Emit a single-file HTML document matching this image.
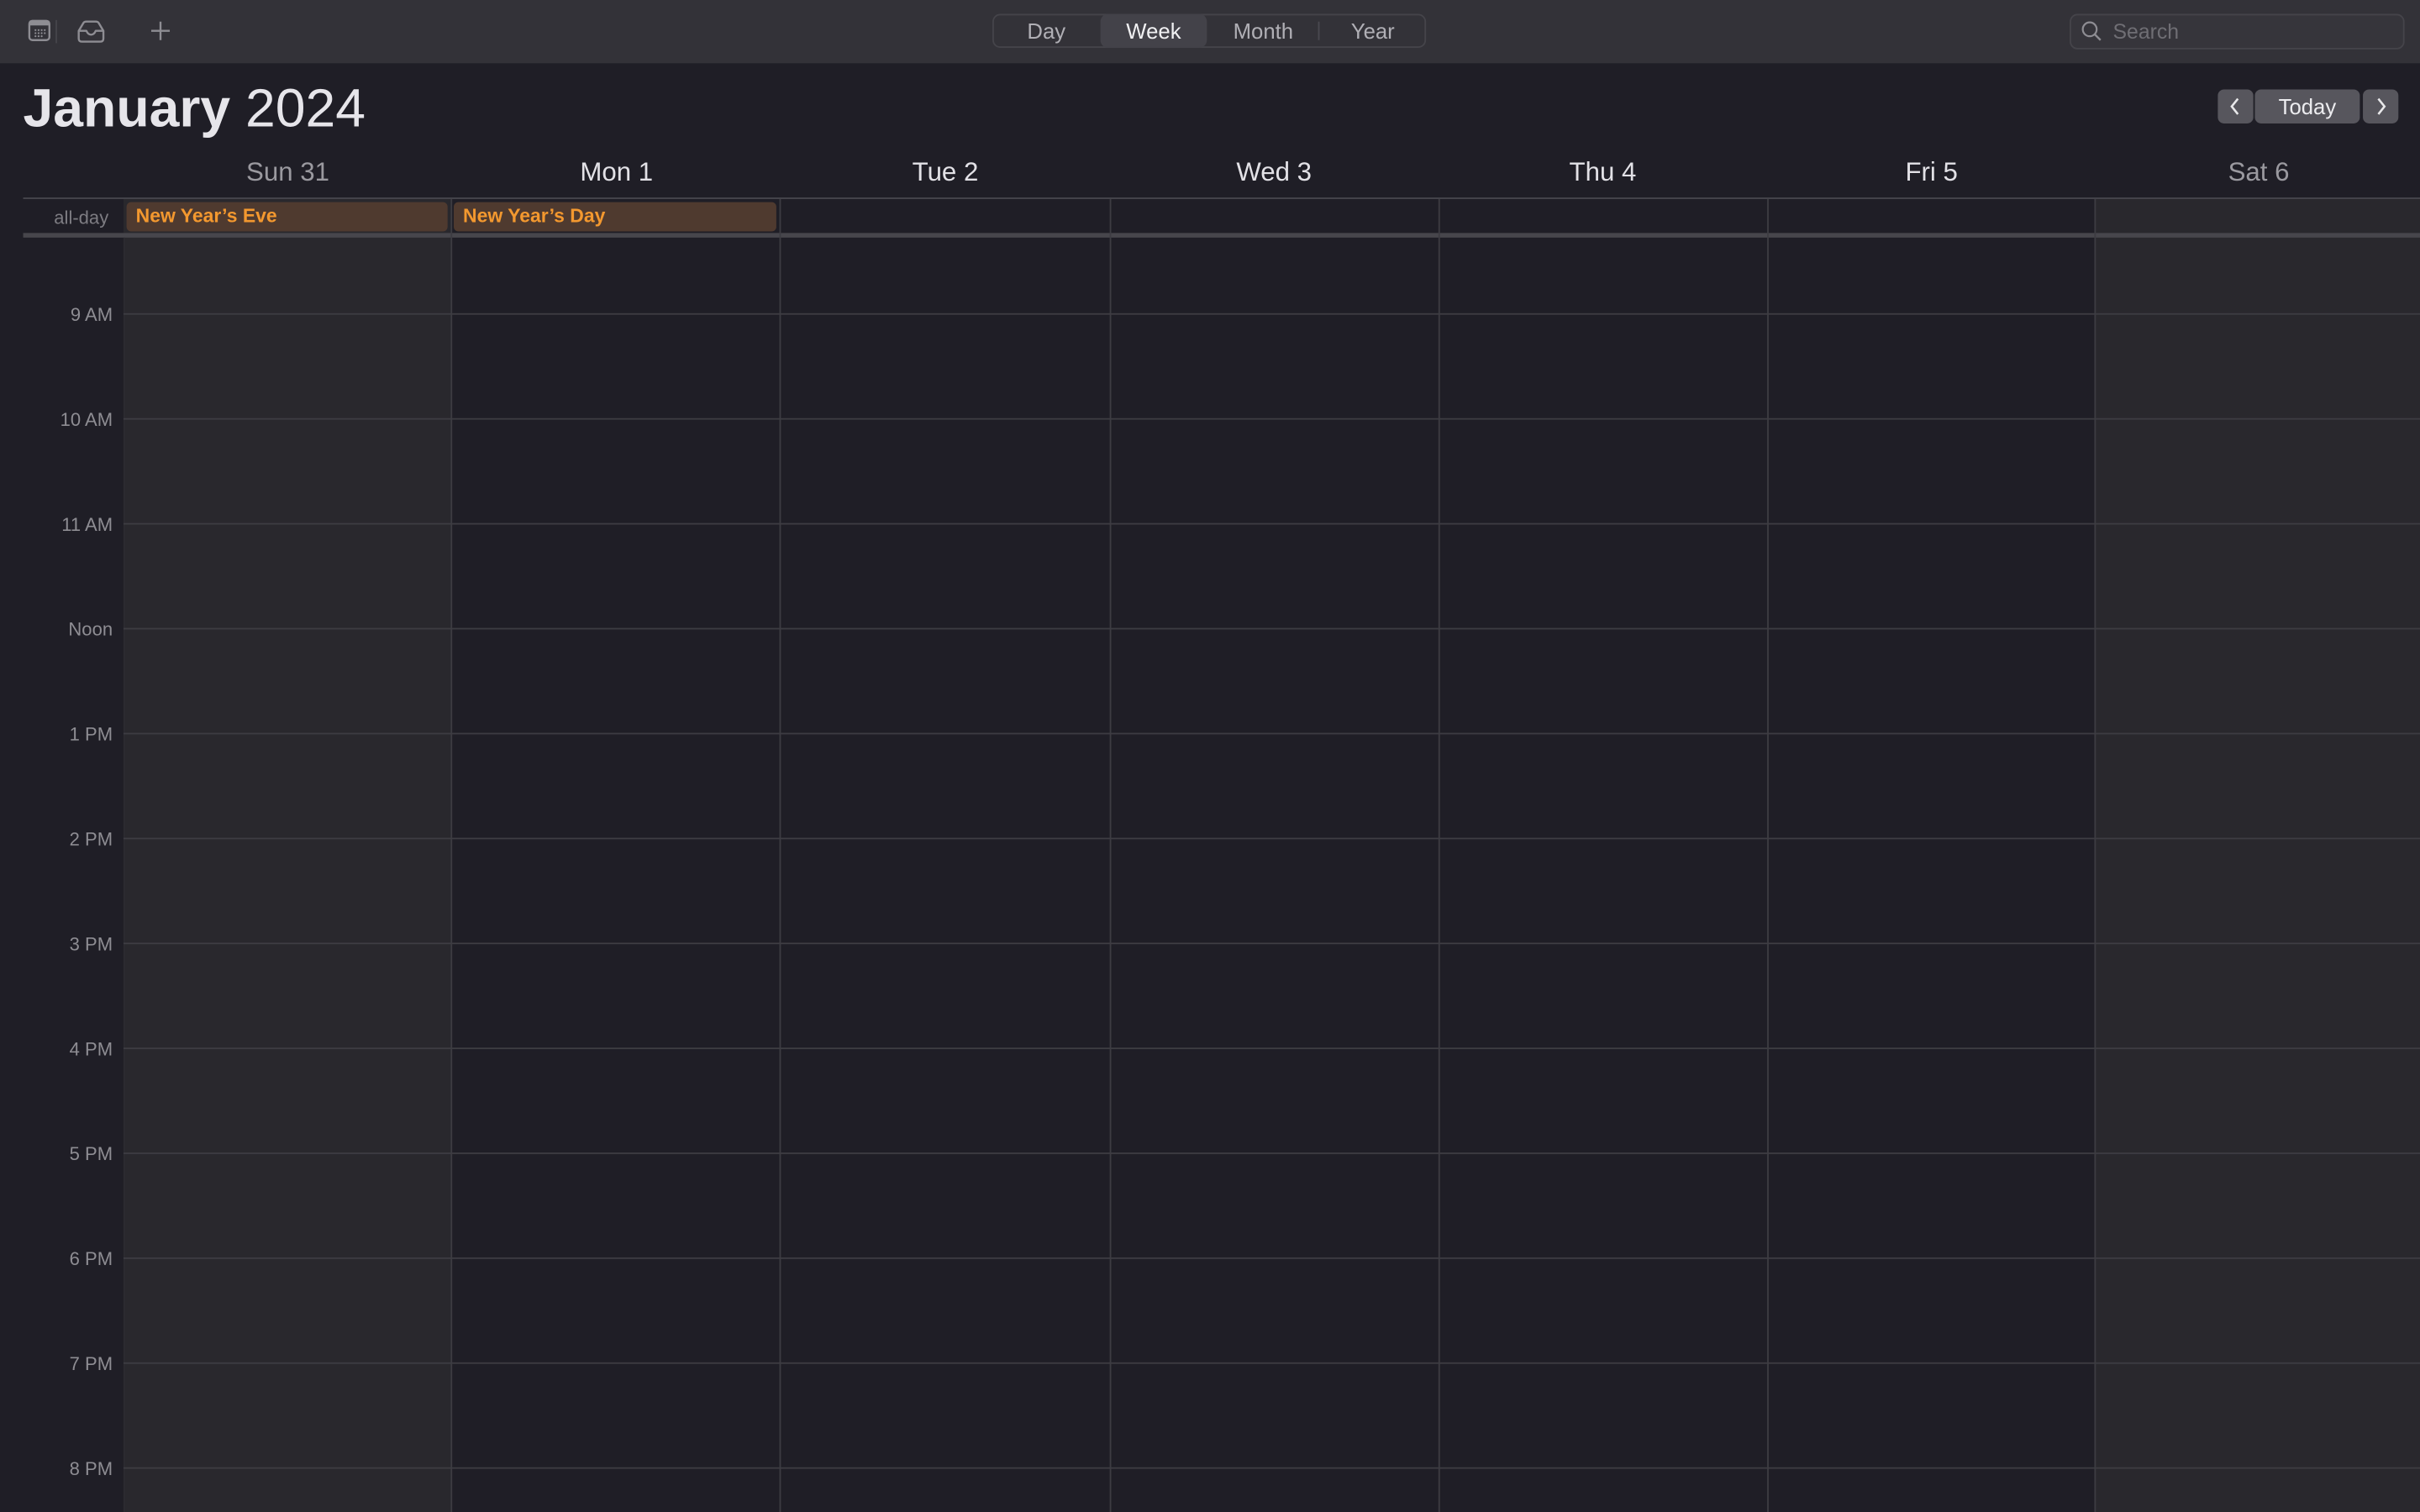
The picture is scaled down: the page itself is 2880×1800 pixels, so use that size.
<!DOCTYPE html>
<html><head><meta charset="utf-8"><style>
html,body{margin:0;padding:0;background:#1f1e26;overflow:hidden;}
#w{position:absolute;left:0;top:0;width:1568px;height:980px;transform:scale(1.836735);transform-origin:0 0;font-family:"Liberation Sans",sans-serif;background:#1f1e26;overflow:hidden;}
.a{position:absolute;}
.tb{left:0;top:0;width:1568px;height:41px;background:#333238;}
.vl{position:absolute;top:129px;bottom:0;width:1px;background:#3d3c42;}
.hl{position:absolute;left:80px;right:0;height:1px;background:#3d3c42;}
.hlab{position:absolute;right:1496px;font-size:12px;color:#8e8d93;width:70px;text-align:right;}
.day{position:absolute;top:102px;width:213px;text-align:center;font-size:17px;color:#e2e1e6;}
.ev{position:absolute;top:131px;height:19px;background:#4f3a2f;border-radius:3px;color:#f3982f;font-weight:bold;font-size:12.5px;line-height:18px;padding-left:6px;box-sizing:border-box;}
</style></head><body><div id="w">
<div class="a tb"></div>
<svg class="a" style="left:18px;top:12px" width="16" height="16" viewBox="0 0 16 16"><rect x="1" y="1.5" width="13" height="12.5" rx="2" fill="none" stroke="#8e8d93" stroke-width="1.3"/><rect x="1" y="1.5" width="13" height="3" fill="#8e8d93"/><g fill="#8e8d93"><circle cx="5" cy="7.5" r=".6"/><circle cx="7" cy="7.5" r=".6"/><circle cx="9" cy="7.5" r=".6"/><circle cx="11" cy="7.5" r=".6"/><circle cx="5" cy="9.5" r=".6"/><circle cx="7" cy="9.5" r=".6"/><circle cx="9" cy="9.5" r=".6"/><circle cx="11" cy="9.5" r=".6"/><circle cx="5" cy="11.5" r=".6"/><circle cx="7" cy="11.5" r=".6"/><circle cx="9" cy="11.5" r=".6"/></g></svg>
<div class="a" style="left:36px;top:13px;width:1px;height:15px;background:#45444a"></div>
<svg class="a" style="left:49px;top:13px" width="20" height="15" viewBox="0 0 20 15"><path d="M2 7 L5 2 Q5.5 1 7 1 L13 1 Q14.5 1 15 2 L18 7 L18 12 Q18 14 16 14 L4 14 Q2 14 2 12 Z M2 7 L7 7 Q8 9.5 10 9.5 Q12 9.5 13 7 L18 7" fill="none" stroke="#8e8d93" stroke-width="1.3" stroke-linejoin="round"/></svg>
<svg class="a" style="left:97px;top:13px" width="14" height="14" viewBox="0 0 14 14"><path d="M7 1V13M1 7H13" stroke="#8e8d93" stroke-width="1.3"/></svg>
<div class="a" style="left:643px;top:9px;width:281px;height:22px;border:1px solid #45444a;border-radius:5px;box-sizing:border-box"></div>
<div class="a" style="left:713px;top:9px;width:69px;height:22px;background:#434249;border-radius:5px"></div>
<div class="a" style="left:854px;top:14px;width:1px;height:12px;background:#4a4950"></div>
<div class="a" style="left:643px;top:12px;width:70px;text-align:center;font-size:14px;color:#b0afb5">Day</div>
<div class="a" style="left:713px;top:12px;width:69px;text-align:center;font-size:14px;color:#f0f0f2">Week</div>
<div class="a" style="left:783px;top:12px;width:71px;text-align:center;font-size:14px;color:#b0afb5">Month</div>
<div class="a" style="left:855px;top:12px;width:69px;text-align:center;font-size:14px;color:#b0afb5">Year</div>
<div class="a" style="left:1341px;top:9px;width:217px;height:23px;border:1px solid #45444a;border-radius:5px;box-sizing:border-box;background:#36353b"></div>
<svg class="a" style="left:1348px;top:13px" width="15" height="15" viewBox="0 0 15 15"><circle cx="6" cy="6" r="4.5" fill="none" stroke="#8e8d93" stroke-width="1.2"/><path d="M9.3 9.3L13 13" stroke="#8e8d93" stroke-width="1.3"/></svg>
<div class="a" style="left:1369px;top:13px;font-size:13.5px;color:#6f6e74">Search</div>
<div class="a" style="left:15px;top:51px;font-size:35px;color:#e6e5ea;white-space:nowrap"><b>January</b> 2024</div>
<div class="a" style="left:1437px;top:58px;width:23px;height:22px;background:#57565d;border-radius:4px"></div>
<div class="a" style="left:1461px;top:58px;width:68px;height:22px;background:#57565d;border-radius:4px;text-align:center;font-size:14px;line-height:22px;color:#ececef">Today</div>
<div class="a" style="left:1531px;top:58px;width:23px;height:22px;background:#57565d;border-radius:4px"></div>
<svg class="a" style="left:1443px;top:62px" width="10" height="14" viewBox="0 0 10 14"><path d="M7 2L3 7L7 12" fill="none" stroke="#e8e8ea" stroke-width="1.4"/></svg>
<svg class="a" style="left:1538px;top:62px" width="10" height="14" viewBox="0 0 10 14"><path d="M3 2L7 7L3 12" fill="none" stroke="#e8e8ea" stroke-width="1.4"/></svg>
<div class="a" style="left:80px;top:129px;width:212px;height:851px;background:#29282d"></div>
<div class="a" style="left:1357px;top:129px;width:211px;height:851px;background:#29282d"></div>
<div class="day" style="left:80px;color:#9a999f">Sun 31</div>
<div class="day" style="left:293px">Mon 1</div>
<div class="day" style="left:506px">Tue 2</div>
<div class="day" style="left:719px">Wed 3</div>
<div class="day" style="left:932px">Thu 4</div>
<div class="day" style="left:1145px">Fri 5</div>
<div class="day" style="left:1357px;color:#9a999f">Sat 6</div>
<div class="a" style="left:15px;top:128px;width:1553px;height:1px;background:#47464c"></div>
<div class="a" style="left:15px;top:151px;width:1553px;height:3px;background:#47464c"></div>
<div class="vl" style="left:80px;top:154px;background:#2c2b31"></div>
<div class="vl" style="left:292px"></div><div class="vl" style="left:505px"></div><div class="vl" style="left:719px"></div><div class="vl" style="left:932px"></div><div class="vl" style="left:1145px"></div><div class="vl" style="left:1357px"></div>
<div class="a" style="left:35px;top:134px;font-size:12px;color:#7d7c82">all-day</div>
<div class="ev" style="left:82px;width:208px">New Year’s Eve</div>
<div class="ev" style="left:294px;width:209px">New Year’s Day</div>
<div class="hl" style="top:203px"></div><div class="hl" style="top:271px"></div><div class="hl" style="top:339px"></div><div class="hl" style="top:407px"></div><div class="hl" style="top:475px"></div><div class="hl" style="top:543px"></div><div class="hl" style="top:611px"></div><div class="hl" style="top:679px"></div><div class="hl" style="top:747px"></div><div class="hl" style="top:815px"></div><div class="hl" style="top:883px"></div><div class="hl" style="top:951px"></div>
<div class="hlab" style="left:3px;top:197px">9 AM</div>
<div class="hlab" style="left:3px;top:265px">10 AM</div>
<div class="hlab" style="left:3px;top:333px">11 AM</div>
<div class="hlab" style="left:3px;top:401px">Noon</div>
<div class="hlab" style="left:3px;top:469px">1 PM</div>
<div class="hlab" style="left:3px;top:537px">2 PM</div>
<div class="hlab" style="left:3px;top:605px">3 PM</div>
<div class="hlab" style="left:3px;top:673px">4 PM</div>
<div class="hlab" style="left:3px;top:741px">5 PM</div>
<div class="hlab" style="left:3px;top:809px">6 PM</div>
<div class="hlab" style="left:3px;top:877px">7 PM</div>
<div class="hlab" style="left:3px;top:945px">8 PM</div>
</div></body></html>
